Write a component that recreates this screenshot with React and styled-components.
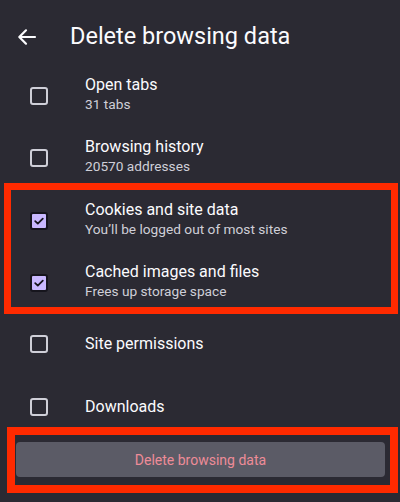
import React from "react";
import styled, { createGlobalStyle } from "styled-components";

const GlobalStyle = createGlobalStyle`
  html, body {
    margin: 0;
    padding: 0;
    background: #2b2a33;
  }
  body {
    font-family: Roboto, "Noto Sans", "Liberation Sans", sans-serif;
    color: #fbfbfe;
  }
`;

const Screen = styled.div`
  position: relative;
  width: 400px;
  height: 502px;
  overflow: hidden;
  background: #2b2a33;
`;

const Header = styled.div`
  display: flex;
  align-items: center;
  height: 63px;
  padding-left: 16px;
  box-sizing: border-box;
`;

const BackButton = styled.div`
  width: 22px;
  height: 22px;
  display: flex;
  align-items: center;
  justify-content: center;
  margin-right: 32px;
  margin-top: 10px;
`;

const Title = styled.h1`
  margin: 0;
  margin-top: 9px;
  font-size: 23.5px;
  font-weight: 400;
  color: #fbfbfe;
`;

const List = styled.div`
  display: flex;
  flex-direction: column;
`;

const Row = styled.div`
  display: flex;
  align-items: center;
  height: 62.5px;
  padding-left: 30px;
  box-sizing: border-box;
`;

const Box = styled.div`
  width: 18px;
  height: 18px;
  box-sizing: border-box;
  border-radius: 3px;
  display: flex;
  align-items: center;
  justify-content: center;
  border: 2px solid ${p => (p.$checked ? "#16151d" : "#cfcfd8")};
  background: ${p => (p.$checked ? "#c9b8ff" : "transparent")};
  margin-right: 37px;
  margin-top: ${p => (p.$single ? "0" : "3px")};
`;

const Texts = styled.div`
  display: flex;
  flex-direction: column;
`;

const Label = styled.div`
  font-size: 16px;
  line-height: 20px;
  color: #fbfbfe;
`;

const Sub = styled.div`
  font-size: 13.7px;
  line-height: 19px;
  color: #cfcfd8;
`;

const Footer = styled.div`
  padding: 4px 15px 0 16px;
`;

const DeleteButton = styled.div`
  height: 35px;
  border-radius: 4px;
  background: #5b5b66;
  display: flex;
  align-items: center;
  justify-content: center;
  font-size: 14px;
  color: #ee8c98;
`;

const Highlight = styled.div`
  position: absolute;
  box-sizing: border-box;
  border: ${p => p.$w}px solid #ff2a00;
  pointer-events: none;
`;

const Check = () => (
  <svg width="12" height="12" viewBox="0 0 12 12">
    <path d="M2.2 6.2 L4.8 8.6 L9.8 3.6" fill="none" stroke="#16151d" strokeWidth="1.8" strokeLinecap="round" strokeLinejoin="round" />
  </svg>
);

const items = [
  { label: "Open tabs", sub: "31 tabs" },
  { label: "Browsing history", sub: "20570 addresses" },
  { label: "Cookies and site data", sub: "You’ll be logged out of most sites", checked: true },
  { label: "Cached images and files", sub: "Frees up storage space", checked: true },
  { label: "Site permissions" },
  { label: "Downloads" }
];

export default function App() {
  return (
    <Screen>
      <GlobalStyle />
      <Header>
        <BackButton>
          <svg width="22" height="22" viewBox="0 0 22 22">
            <path d="M19 11 H3.5 M10 4.3 L3.3 11 L10 17.7" fill="none" stroke="#fbfbfe" strokeWidth="2.2" strokeLinecap="round" strokeLinejoin="round" />
          </svg>
        </BackButton>
        <Title>Delete browsing data</Title>
      </Header>
      <List>
        {items.map(item => (
          <Row key={item.label}>
            <Box $checked={item.checked} $single={!item.sub}>
              {item.checked && <Check />}
            </Box>
            <Texts>
              <Label>{item.label}</Label>
              {item.sub && <Sub>{item.sub}</Sub>}
            </Texts>
          </Row>
        ))}
      </List>
      <Footer>
        <DeleteButton>Delete browsing data</DeleteButton>
      </Footer>
      <Highlight $w={7} style={{ left: 4, top: 183, width: 394, height: 131 }} />
      <Highlight $w={8} style={{ left: 7, top: 427, width: 391, height: 66 }} />
    </Screen>
  );
}
